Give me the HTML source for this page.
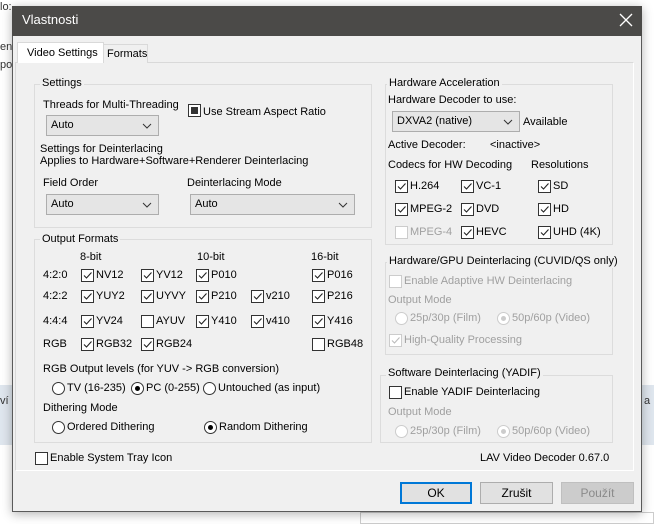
<!DOCTYPE html>
<html><head><meta charset="utf-8"><style>
*{box-sizing:border-box;margin:0;padding:0}
body{width:654px;height:524px;overflow:hidden;background:#fff;font-family:"Liberation Sans",sans-serif;font-size:11px;color:#000;position:relative}
.a{position:absolute}
.t{position:absolute;white-space:nowrap;line-height:14px}
.g{color:#a0a0a0}
.grp{position:absolute;border:1px solid #dcdcdc}
.lab{position:absolute;background:#f0f0f0;padding:0 2px;line-height:14px;white-space:nowrap}
.cb{position:absolute;width:13px;height:13px;border:1px solid #333;background:#fff}
.cb.d{border-color:#ccc}
.cb svg{position:absolute;left:0;top:0}
.rd{position:absolute;width:13px;height:13px;border:1px solid #333;border-radius:50%;background:#fff}
.rd.d{border-color:#ccc}
.rd i{position:absolute;left:3px;top:3px;width:5px;height:5px;border-radius:50%;background:#000}
.rd.d i{background:#ccc}
.cmb{position:absolute;height:21px;border:1px solid #adadad;background:#e5e5e5;line-height:19px;padding-left:4px}
.cmb svg{position:absolute;right:6px;top:7px}
.btn{position:absolute;height:22px;border:1px solid #adadad;background:#e1e1e1;text-align:center;line-height:20px;font-size:12px}
</style></head><body>
<div class="t" style="left:0;top:0;color:#333">lo:</div>
<div class="t" style="left:0;top:40px;color:#333">en</div>
<div class="t" style="left:0;top:58px;color:#333">po</div>
<div class="a" style="left:0;top:385px;width:12px;height:60px;background:#dfe6ee"></div>
<div class="a" style="left:642px;top:385px;width:12px;height:60px;background:#dfe6ee"></div>
<div class="t" style="left:0;top:394px;color:#333">ví</div>
<div class="t" style="left:644px;top:394px;color:#333">a</div>
<div class="a" style="left:360px;top:512px;width:294px;height:12px;border:1px solid #ccc;background:#fff"></div>

<div class="a" style="left:12px;top:6px;width:630px;height:506px;background:#f0f0f0;border:1px solid #5a5a5a;box-shadow:0 2px 10px rgba(0,0,0,.3)"></div>
<div class="a" style="left:12px;top:6px;width:630px;height:30px;background:#4b4a48"></div>
<div class="t" style="left:22px;top:13px;color:#fff;font-size:13px">Vlastnosti</div>
<svg class="a" style="left:619px;top:13px" width="14" height="14"><path d="M1 1L13 13M13 1L1 13" stroke="#fff" stroke-width="1.3"/></svg>

<div class="a" style="left:15px;top:62px;width:619px;height:409px;border:1px solid #d9d9d9;border-bottom-color:#fff;border-right-color:#fff"></div>
<div class="a" style="left:103px;top:44px;width:45px;height:19px;border:1px solid #d9d9d9;border-bottom:none;background:#f0f0f0"></div>
<div class="t" style="left:107px;top:47px">Formats</div>
<div class="a" style="left:17px;top:42px;width:87px;height:21px;border:1px solid #d9d9d9;border-bottom:none;background:#fff"></div>
<div class="t" style="left:27px;top:46px">Video Settings</div>

<div class="grp" style="left:34px;top:84px;width:338px;height:144px"></div>
<div class="lab" style="left:40px;top:76px">Settings</div>
<div class="t" style="left:43px;top:98px">Threads for Multi-Threading</div>
<div class="cmb" style="left:46px;top:115px;width:113px">Auto<svg width="10" height="6"><path d="M1 1L5 5L9 1" stroke="#333" fill="none"/></svg></div>
<div class="cb" style="left:188px;top:104px"><div class="a" style="left:2px;top:2px;width:7px;height:7px;background:#333"></div></div>
<div class="t" style="left:203px;top:105px">Use Stream Aspect Ratio</div>
<div class="t" style="left:40px;top:142px">Settings for Deinterlacing</div>
<div class="t" style="left:40px;top:154px">Applies to Hardware+Software+Renderer Deinterlacing</div>
<div class="t" style="left:43px;top:176px">Field Order</div>
<div class="t" style="left:187px;top:176px">Deinterlacing Mode</div>
<div class="cmb" style="left:46px;top:194px;width:113px">Auto<svg width="10" height="6"><path d="M1 1L5 5L9 1" stroke="#333" fill="none"/></svg></div>
<div class="cmb" style="left:190px;top:194px;width:165px">Auto<svg width="10" height="6"><path d="M1 1L5 5L9 1" stroke="#333" fill="none"/></svg></div>

<div class="grp" style="left:34px;top:239px;width:338px;height:204px"></div>
<div class="lab" style="left:40px;top:232px">Output Formats</div>
<div class="t" style="left:80px;top:250px">8-bit</div>
<div class="t" style="left:197px;top:250px">10-bit</div>
<div class="t" style="left:311px;top:250px">16-bit</div>
<div class="t" style="left:43px;top:268px">4:2:0</div>
<div class="t" style="left:43px;top:289px">4:2:2</div>
<div class="t" style="left:43px;top:314px">4:4:4</div>
<div class="t" style="left:43px;top:337px">RGB</div>

<div id="of"></div>

<div class="t" style="left:43px;top:362px">RGB Output levels (for YUV -&gt; RGB conversion)</div>
<div class="rd" style="left:52px;top:382px"></div><div class="t" style="left:67px;top:381px">TV (16-235)</div>
<div class="rd" style="left:131px;top:382px"><i></i></div><div class="t" style="left:146px;top:381px">PC (0-255)</div>
<div class="rd" style="left:203px;top:382px"></div><div class="t" style="left:218px;top:381px">Untouched (as input)</div>
<div class="t" style="left:43px;top:401px">Dithering Mode</div>
<div class="rd" style="left:52px;top:421px"></div><div class="t" style="left:67px;top:420px">Ordered Dithering</div>
<div class="rd" style="left:204px;top:421px"><i></i></div><div class="t" style="left:219px;top:420px">Random Dithering</div>

<div class="grp" style="left:385px;top:84px;width:228px;height:161px"></div>
<div class="lab" style="left:387px;top:76px">Hardware Acceleration</div>
<div class="t" style="left:388px;top:93px">Hardware Decoder to use:</div>
<div class="cmb" style="left:392px;top:111px;width:128px">DXVA2 (native)<svg width="10" height="6"><path d="M1 1L5 5L9 1" stroke="#333" fill="none"/></svg></div>
<div class="t" style="left:523px;top:115px">Available</div>
<div class="t" style="left:388px;top:138px">Active Decoder:</div>
<div class="t" style="left:490px;top:138px">&lt;inactive&gt;</div>
<div class="t" style="left:388px;top:158px">Codecs for HW Decoding</div>
<div class="t" style="left:531px;top:158px">Resolutions</div>

<div class="grp" style="left:385px;top:262px;width:228px;height:93px"></div>
<div class="lab" style="left:387px;top:254px">Hardware/GPU Deinterlacing (CUVID/QS only)</div>
<div class="cb d" style="left:389px;top:275px"></div><div class="t g" style="left:404px;top:274px">Enable Adaptive HW Deinterlacing</div>
<div class="t g" style="left:388px;top:293px">Output Mode</div>
<div class="rd d" style="left:395px;top:312px"></div><div class="t g" style="left:410px;top:311px">25p/30p (Film)</div>
<div class="rd d" style="left:497px;top:312px"><i></i></div><div class="t g" style="left:512px;top:311px">50p/60p (Video)</div>
<div class="cb d" style="left:389px;top:334px"><svg width="11" height="11"><path d="M2 5.5L4.5 8L9.5 2.5" stroke="#bbb" fill="none" stroke-width="1.1"/></svg></div><div class="t g" style="left:404px;top:333px">High-Quality Processing</div>

<div class="grp" style="left:380px;top:375px;width:233px;height:68px"></div>
<div class="lab" style="left:386px;top:366px">Software Deinterlacing (YADIF)</div>
<div class="cb" style="left:389px;top:386px"></div><div class="t" style="left:404px;top:385px">Enable YADIF Deinterlacing</div>
<div class="t g" style="left:388px;top:405px">Output Mode</div>
<div class="rd d" style="left:395px;top:425px"></div><div class="t g" style="left:410px;top:424px">25p/30p (Film)</div>
<div class="rd d" style="left:497px;top:425px"><i></i></div><div class="t g" style="left:512px;top:424px">50p/60p (Video)</div>

<div class="cb" style="left:35px;top:452px"></div><div class="t" style="left:50px;top:451px">Enable System Tray Icon</div>
<div class="t" style="left:480px;top:451px">LAV Video Decoder 0.67.0</div>

<div class="btn" style="left:400px;top:482px;width:72px;border:2px solid #0078d7;line-height:18px">OK</div>
<div class="btn" style="left:480px;top:482px;width:73px">Zrušit</div>
<div class="btn" style="left:561px;top:482px;width:73px;border-color:#bfbfbf;background:#ccc;color:#8a8a8a">Použít</div>

<script>
var C='<svg width="11" height="11"><path d="M2 5.5L4.5 8L9.5 2.5" stroke="#222" fill="none" stroke-width="1.1"/></svg>';
var items=[
[81,269,'NV12',1],[141,269,'YV12',1],[196,269,'P010',1],[312,269,'P016',1],
[81,290,'YUY2',1],[141,290,'UYVY',1],[196,290,'P210',1],[251,290,'v210',1],[312,290,'P216',1],
[81,315,'YV24',1],[141,315,'AYUV',0],[196,315,'Y410',1],[251,315,'v410',1],[312,315,'Y416',1],
[81,338,'RGB32',1],[141,338,'RGB24',1],[312,338,'RGB48',0],
[395,180,'H.264',1],[461,180,'VC-1',1],[538,180,'SD',1],
[395,203,'MPEG-2',1],[461,203,'DVD',1],[538,203,'HD',1],
[395,226,'MPEG-4',2],[461,226,'HEVC',1],[538,226,'UHD (4K)',1]];
var h='';
items.forEach(function(i){
 var d=i[3]==2;
 h+='<div class="cb'+(d?' d':'')+'" style="left:'+i[0]+'px;top:'+i[1]+'px">'+(i[3]==1?C:'')+'</div>';
 h+='<div class="t'+(d?' g':'')+'" style="left:'+(i[0]+15)+'px;top:'+(i[1]-1)+'px">'+i[2]+'</div>';
});
document.getElementById('of').outerHTML=h;
</script>
</body></html>
